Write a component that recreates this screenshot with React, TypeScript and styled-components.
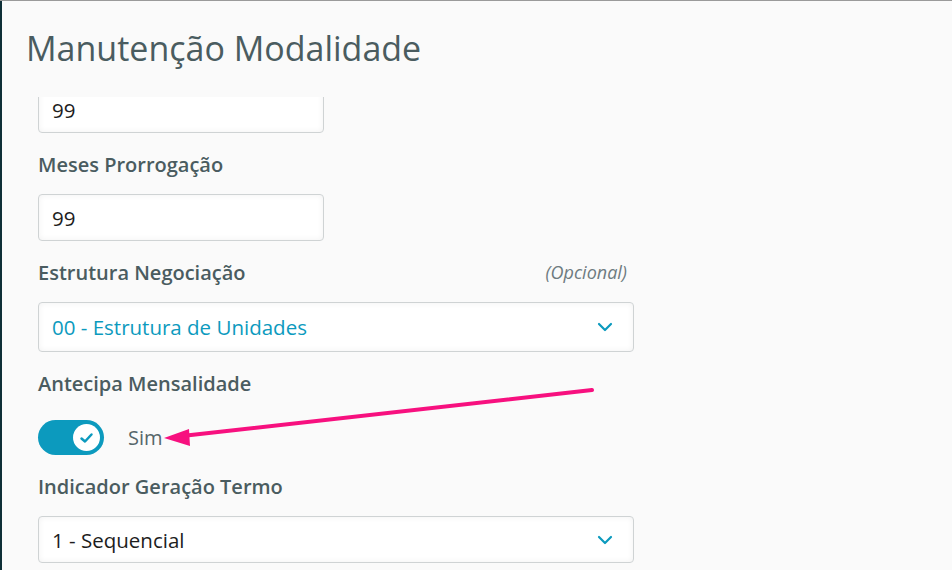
import React, { useLayoutEffect, useRef } from "react";
import styled, { createGlobalStyle } from "styled-components";

const Global = createGlobalStyle`
  html, body { margin: 0; padding: 0; background: #fafafa; }
  body { font-family: "Open Sans", "Noto Sans", sans-serif; overflow: hidden; }
  * { box-sizing: border-box; }
`;

const Page = styled.div`
  position: relative;
  width: 952px;
  height: 570px;
  display: flex;
  background: #fafafa;
  border-top: 1px solid #9a9a9a;
`;

const SideStrip = styled.div`
  width: 2px;
  flex: none;
  background: #0e2f37;
`;

const Panel = styled.div`
  flex: 1;
  display: flex;
  flex-direction: column;
  min-width: 0;
`;

const Header = styled.header`
  height: 96px;
  flex: none;
  padding: 25px 0 0 24px;
`;

const Title = styled.h1`
  margin: 0;
  font-size: 34px;
  font-weight: 400;
  line-height: 44px;
  color: #4a5c60;
`;

const Scroll = styled.div`
  flex: 1;
  overflow: hidden;
`;

const Form = styled.div`
  display: flex;
  flex-direction: column;
  gap: 19px;
  padding: 0 0 60px 36px;
`;

const Field = styled.div<{ $w: number }>`
  width: ${(p) => p.$w}px;
  display: flex;
  flex-direction: column;
`;

const LabelRow = styled.div`
  display: flex;
  align-items: center;
  justify-content: space-between;
  height: 24px;
  margin-bottom: 18px;
  padding-right: 7px;
`;

const Label = styled.span`
  font-size: 20px;
  font-weight: 600;
  color: #4a5c60;
`;

const Optional = styled.span`
  font-size: 18px;
  font-style: italic;
  color: #6e7b80;
`;

const Box = styled.div<{ $h?: number }>`
  height: ${(p) => p.$h ?? 47}px;
  display: flex;
  align-items: center;
  justify-content: space-between;
  padding: 0 20px 0 13px;
  background: #ffffff;
  border: 1px solid #cfd3d4;
  border-radius: 4px;
  box-shadow: inset 0 0 6px rgba(0, 0, 0, 0.06);
`;

const Value = styled.span<{ $accent?: boolean }>`
  font-size: 20.5px;
  color: ${(p) => (p.$accent ? "#0c9abe" : "#1d1d1d")};
`;

const ToggleRow = styled.div`
  display: flex;
  align-items: center;
  gap: 24px;
  margin-top: 7px;
`;

const Switch = styled.div`
  width: 66px;
  height: 35px;
  border-radius: 18px;
  background: #0c9abe;
  display: flex;
  align-items: center;
  justify-content: flex-end;
  padding-right: 4px;
`;

const Knob = styled.div`
  width: 27px;
  height: 27px;
  border-radius: 50%;
  background: #ffffff;
  display: flex;
  align-items: center;
  justify-content: center;
`;

const SwitchText = styled.span`
  font-size: 20px;
  color: #56666a;
`;

const Annotation = styled.svg`
  position: absolute;
  left: 0;
  top: 0;
  pointer-events: none;
`;

const Chevron = () => (
  <svg width="16" height="10" viewBox="0 0 16 10">
    <path d="M2 2 L8 8 L14 2" fill="none" stroke="#0c9abe" strokeWidth="2.2" strokeLinecap="round" strokeLinejoin="round" />
  </svg>
);

export default function App() {
  const scrollRef = useRef<HTMLDivElement>(null);
  useLayoutEffect(() => {
    if (scrollRef.current) scrollRef.current.scrollTop = 11;
  }, []);
  return (
    <Page>
      <Global />
      <SideStrip />
      <Panel>
        <Header>
          <Title>Manutenção Modalidade</Title>
        </Header>
        <Scroll ref={scrollRef}>
          <Form>
            <Field $w={286}>
              <Box>
                <Value>99</Value>
              </Box>
            </Field>
            <Field $w={286}>
              <LabelRow>
                <Label>Meses Prorrogação</Label>
              </LabelRow>
              <Box>
                <Value>99</Value>
              </Box>
            </Field>
            <Field $w={596}>
              <LabelRow>
                <Label>Estrutura Negociação</Label>
                <Optional>(Opcional)</Optional>
              </LabelRow>
              <Box $h={50}>
                <Value $accent>00 - Estrutura de Unidades</Value>
                <Chevron />
              </Box>
            </Field>
            <Field $w={596}>
              <LabelRow>
                <Label>Antecipa Mensalidade</Label>
              </LabelRow>
              <ToggleRow>
                <Switch>
                  <Knob>
                    <svg width="15" height="12" viewBox="0 0 14 12">
                      <path d="M2 6.5 L5.5 9.5 L12 2.5" fill="none" stroke="#0c9abe" strokeWidth="2.5" strokeLinecap="round" strokeLinejoin="round" />
                    </svg>
                  </Knob>
                </Switch>
                <SwitchText>Sim</SwitchText>
              </ToggleRow>
            </Field>
            <Field $w={596}>
              <LabelRow>
                <Label>Indicador Geração Termo</Label>
              </LabelRow>
              <Box>
                <Value>1 - Sequencial</Value>
                <Chevron />
              </Box>
            </Field>
          </Form>
        </Scroll>
      </Panel>
      <Annotation width="952" height="570" viewBox="0 0 952 570">
        <line x1="592" y1="389" x2="182" y2="435" stroke="#f7107f" strokeWidth="4" strokeLinecap="round" />
        <polygon points="164,437 189,428 190,445" fill="#f7107f" />
      </Annotation>
    </Page>
  );
}
